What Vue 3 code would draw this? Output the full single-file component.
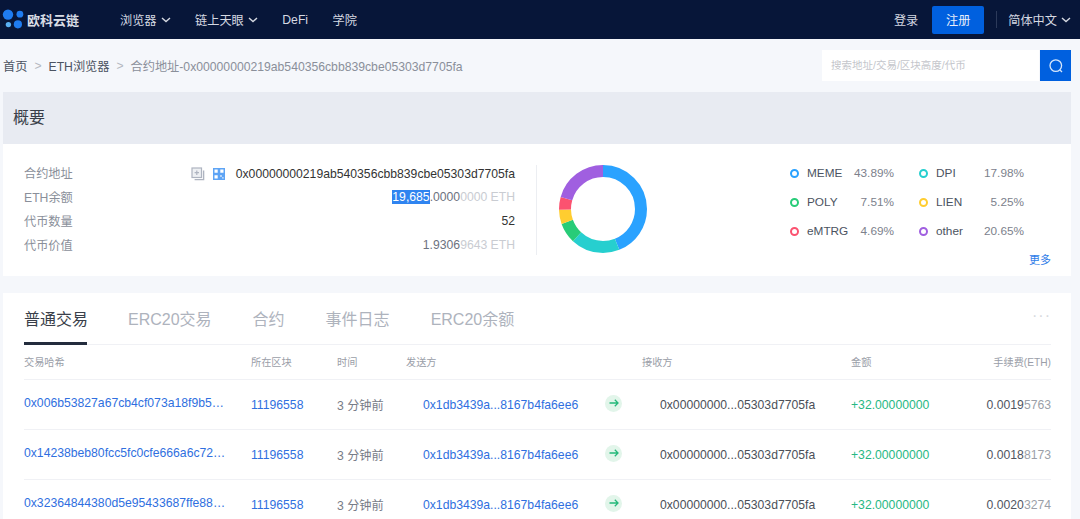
<template>
  <div class="page">
    <header class="navbar">
      <div class="logo">
        <svg width="27" height="39" viewBox="0 0 27 39">
          <circle cx="8" cy="14.6" r="5.2" fill="#1f7cf0" />
          <circle cx="19.9" cy="14.2" r="3.4" fill="#1f7cf0" />
          <circle cx="8.4" cy="24.6" r="2.7" fill="#5ab0f2" />
          <circle cx="17.9" cy="24.3" r="4.1" fill="#1f7cf0" />
        </svg>
        <span class="logo-text">欧科云链</span>
      </div>
      <nav class="nav-links">
        <a class="nav-item">浏览器<svg class="chev" viewBox="0 0 10 6"><path d="M1 1l4 3.6L9 1" /></svg></a>
        <a class="nav-item">链上天眼<svg class="chev" viewBox="0 0 10 6"><path d="M1 1l4 3.6L9 1" /></svg></a>
        <a class="nav-item">DeFi</a>
        <a class="nav-item">学院</a>
      </nav>
      <div class="nav-right">
        <a class="login">登录</a>
        <button class="register">注册</button>
        <span class="nav-sep"></span>
        <a class="lang">简体中文<svg class="chev" viewBox="0 0 10 6"><path d="M1 1l4 3.6L9 1" /></svg></a>
      </div>
    </header>

    <div class="crumb-bar">
      <div class="crumbs">
        <span class="crumb">首页</span>
        <span class="crumb-sep">&gt;</span>
        <span class="crumb">ETH浏览器</span>
        <span class="crumb-sep">&gt;</span>
        <span class="crumb current">合约地址-0x00000000219ab540356cbb839cbe05303d7705fa</span>
      </div>
      <div class="search">
        <div class="search-input">搜索地址/交易/区块高度/代币</div>
        <button class="search-btn">
          <svg width="16" height="16" viewBox="0 0 16 16" fill="none" stroke="#d5e6fb" stroke-width="1.3">
            <circle cx="7.8" cy="7.6" r="5.8" />
            <path d="M12 12l2 2" />
          </svg>
        </button>
      </div>
    </div>

    <section class="summary">
      <h2 class="summary-title">概要</h2>
      <div class="summary-body">
        <div class="info">
          <div class="info-rows">
            <div class="info-row">
              <span class="info-label">合约地址</span>
              <span class="info-value addr">
                <svg class="copy-icon" width="14" height="14" viewBox="0 0 14 14" fill="none" stroke="#aeb4c0" stroke-width="1.2">
                  <rect x="1" y="1" width="9.5" height="9.5" fill="#eef0f3" />
                  <path d="M12.6 3.6v9h-9" stroke-width="1.4" />
                  <path d="M3.6 5.7h4.4M5.8 3.5v4.4" />
                </svg>
                <svg class="qr-icon" width="12" height="12" viewBox="0 0 12 12">
                  <rect width="12" height="12" fill="#5ea4f5" />
                  <path d="M1.5 1.5h3.2v3.2H1.5zM7.3 1.5h3.2v3.2H7.3zM1.5 7.3h3.2v3.2H1.5zM7.3 7.3h1.4v1.4H7.3zM9.3 9.3h1.2v1.2H9.3z" fill="#fff" />
                </svg>
                0x00000000219ab540356cbb839cbe05303d7705fa
              </span>
            </div>
            <div class="info-row">
              <span class="info-label">ETH余额</span>
              <span class="info-value"><span class="selected">19,685</span><span class="mid">.0000</span><span class="faint">0000 ETH</span></span>
            </div>
            <div class="info-row">
              <span class="info-label">代币数量</span>
              <span class="info-value">52</span>
            </div>
            <div class="info-row">
              <span class="info-label">代币价值</span>
              <span class="info-value"><span class="mid">1.9306</span><span class="faint">9643 ETH</span></span>
            </div>
          </div>
        </div>

        <div class="chart">
          <svg width="90" height="90" viewBox="0 0 90 90">
            <g transform="rotate(-90 45 45)">
              <circle
                v-for="seg in segments"
                :key="seg.name"
                cx="45"
                cy="45"
                r="38"
                fill="none"
                stroke-width="12"
                :stroke="seg.fill"
                :stroke-dasharray="seg.dash"
                :stroke-dashoffset="seg.offset"
              />
            </g>
          </svg>
        </div>

        <div class="legend-wrap">
          <div class="legend">
            <div v-for="item in legend" :key="item.name" class="legend-item">
              <span class="dot" :style="{ borderColor: item.color }"></span>
              <span class="legend-name">{{ item.name }}</span>
              <span class="legend-pct">{{ item.pct }}%</span>
            </div>
          </div>
          <a class="more">更多</a>
        </div>
      </div>
    </section>

    <section class="records">
      <div class="tabs">
        <a v-for="(tab, i) in tabs" :key="tab" class="tab" :class="{ active: i === 0 }">{{ tab }}</a>
        <span class="tabs-more">···</span>
      </div>
      <div class="row head">
        <span>交易哈希</span>
        <span>所在区块</span>
        <span>时间</span>
        <span>发送方</span>
        <span></span>
        <span>接收方</span>
        <span>金额</span>
        <span class="right">手续费(ETH)</span>
      </div>
      <div v-for="tx in txs" :key="tx.hash" class="row">
        <a class="link hash">{{ tx.hash }}</a>
        <a class="link">11196558</a>
        <span class="time">3 分钟前</span>
        <a class="link from">0x1db3439a...8167b4fa6ee6</a>
        <span class="arrow">
          <svg width="10" height="8" viewBox="0 0 10 8" fill="none" stroke="#25b87a" stroke-width="1.3">
            <path d="M0.5 4h8.5M5.8 0.8L9 4 5.8 7.2" />
          </svg>
        </span>
        <span class="to">0x00000000...05303d7705fa</span>
        <span class="amount">+32.00000000</span>
        <span class="fee right">{{ tx.fee }}<span class="fee-tail">{{ tx.tail }}</span></span>
      </div>
    </section>
  </div>
</template>

<script setup>
const legend = [
  { name: 'MEME', pct: '43.89', color: '#2aa2ff' },
  { name: 'DPI', pct: '17.98', color: '#26cfcf' },
  { name: 'POLY', pct: '7.51', color: '#28cc78' },
  { name: 'LIEN', pct: '5.25', color: '#ffcd30' },
  { name: 'eMTRG', pct: '4.69', color: '#fb5270' },
  { name: 'other', pct: '20.65', color: '#a05fe0' },
];

// 环形图按顺时针顺序排列
const circ = 2 * Math.PI * 38;
let used = 0;
const segments = legend.map((item) => {
  const len = (parseFloat(item.pct) / 100) * circ;
  const seg = {
    name: item.name,
    fill: item.color,
    dash: `${len} ${circ - len}`,
    offset: -used,
  };
  used += len;
  return seg;
});

const tabs = ['普通交易', 'ERC20交易', '合约', '事件日志', 'ERC20余额'];

const txs = [
  { hash: '0x006b53827a67cb4cf073a18f9b5…', fee: '0.0019', tail: '5763' },
  { hash: '0x14238beb80fcc5fc0cfe666a6c72…', fee: '0.0018', tail: '8173' },
  { hash: '0x32364844380d5e95433687ffe88…', fee: '0.0020', tail: '3274' },
];
</script>

<style scoped>
.page {
  height: 519px;
  overflow: hidden;
  background: #f5f7fb;
  font-family: 'Liberation Sans', 'Noto Sans CJK SC', sans-serif;
  font-size: 12.2px;
  color: #333;
}

.navbar {
  display: flex;
  align-items: center;
  height: 39px;
  padding: 0 9px 0 0;
  background: #071639;
  color: #d5d9e2;
}

.logo {
  display: flex;
  align-items: center;
  width: 120px;
}

.logo-text {
  font-size: 13px;
  font-weight: 700;
  color: #d9dde5;
}

.nav-links {
  display: flex;
  gap: 24.5px;
}

.nav-item {
  display: flex;
  align-items: center;
}

.chev {
  width: 10px;
  height: 6px;
  margin-left: 4px;
  fill: none;
  stroke: #d5d9e2;
  stroke-width: 1.4;
}

.nav-right {
  display: flex;
  align-items: center;
  margin-left: auto;
}

.login {
  margin-right: 14px;
}

.register {
  width: 52px;
  height: 28px;
  padding: 0;
  border: none;
  border-radius: 2px;
  background: #0060df;
  color: #e8eefa;
  font: inherit;
}

.nav-sep {
  width: 1px;
  height: 17px;
  margin: 0 11px 0 12px;
  background: #2c3a5a;
}

.lang {
  display: flex;
  align-items: center;
}

.crumb-bar {
  display: flex;
  align-items: center;
  justify-content: space-between;
  height: 53px;
  padding: 0 9px 0 3px;
}

.crumbs {
  display: flex;
  align-items: center;
}

.crumb {
  color: #4b5361;
}

.crumb.current {
  color: #8a8f9a;
}

.crumb-sep {
  margin: 0 7px;
  color: #b4b8c0;
}

.search {
  display: flex;
  height: 31px;
}

.search-input {
  width: 208px;
  padding-left: 9px;
  background: #fff;
  color: #c4c6cb;
  font-size: 10.5px;
  line-height: 31px;
}

.search-btn {
  display: flex;
  align-items: center;
  justify-content: center;
  width: 31px;
  margin-left: 1px;
  padding: 0;
  border: none;
  background: #0060df;
}

.summary {
  margin: 0 9px 17px 3px;
  background: #fff;
}

.summary-title {
  margin: 0;
  height: 52px;
  padding-left: 10px;
  background: #e8ebf2;
  font-size: 16px;
  font-weight: 400;
  line-height: 51px;
  color: #3a3f4a;
}

.summary-body {
  display: flex;
  height: 132px;
  padding: 21px 20px 0 21px;
  box-sizing: border-box;
}

.info {
  width: 491px;
  height: 90px;
  padding-right: 21px;
  border-right: 1px solid #eceef2;
}

.info-rows {
  margin-top: -4px;
}

.info-row {
  display: flex;
  align-items: center;
  justify-content: space-between;
  height: 24px;
}

.info-label {
  color: #8a8f9a;
}

.info-value {
  color: #333;
}

.addr {
  display: flex;
  align-items: center;
  padding-top: 1px;
}

.copy-icon {
  margin-right: 8px;
}

.qr-icon {
  margin-right: 11px;
}

.selected {
  background: #2f84f0;
  color: #fff;
}

.mid {
  color: #6d7280;
}

.faint {
  color: #c9ccd2;
}

.chart {
  padding-left: 21px;
  margin-top: -1px;
}

.legend-wrap {
  flex: 1;
  margin-top: -3px;
  padding-left: 142px;
}

.legend {
  display: grid;
  grid-template-columns: 104px 105px;
  column-gap: 25px;
  row-gap: 7px;
}

.legend-item {
  display: flex;
  align-items: center;
  height: 22px;
  font-size: 11.8px;
  color: #4b5361;
}

.dot {
  box-sizing: border-box;
  width: 9px;
  height: 9px;
  margin-right: 8px;
  border: 2px solid;
  border-radius: 50%;
}

.legend-pct {
  margin-left: auto;
  color: #7c818c;
}

.more {
  display: block;
  margin-top: 9px;
  text-align: right;
  font-size: 11px;
  color: #2f7de8;
}

.records {
  margin: 0 9px 0 3px;
  padding: 0 20px 0 21px;
  background: #fff;
}

.tabs {
  display: flex;
  align-items: flex-start;
  height: 52px;
  gap: 41px;
  border-bottom: 1px solid #f0f1f5;
  box-sizing: border-box;
}

.tab {
  height: 52px;
  box-sizing: border-box;
  font-size: 16px;
  line-height: 53px;
  color: #aeb3bd;
}

.tab.active {
  width: 63px;
  white-space: nowrap;
  border-bottom: 3px solid #232c3d;
  color: #3a3f4a;
}

.tabs-more {
  margin-left: auto;
  margin-top: 14px;
  color: #d8dade;
  font-size: 16px;
  letter-spacing: 1px;
}

.row {
  display: grid;
  grid-template-columns: 227px 86px 69px 199px 37px 209px 110px 1fr;
  align-items: center;
  height: 50px;
  border-bottom: 1px solid #f0f1f5;
  box-sizing: border-box;
}

.row.head {
  height: 35px;
  padding-bottom: 2px;
  font-size: 10.2px;
  color: #9a9ea8;
}

.right {
  text-align: right;
}

.link {
  color: #2f6fe0;
}

.hash {
  margin-bottom: 4px;
  white-space: nowrap;
}

.from {
  padding-left: 17px;
}

.time {
  color: #777c87;
}

.arrow {
  display: flex;
  align-items: center;
  justify-content: center;
  width: 17px;
  height: 17px;
  margin-bottom: 3px;
  border-radius: 50%;
  background: #e2f5ea;
}

.to {
  padding-left: 18px;
  color: #4b4f58;
}

.amount {
  color: #27b884;
}

.fee {
  color: #50555f;
}

.fee-tail {
  color: #9b9fa8;
}
</style>

<style>
html,
body {
  margin: 0;
  overflow: hidden;
}
</style>
